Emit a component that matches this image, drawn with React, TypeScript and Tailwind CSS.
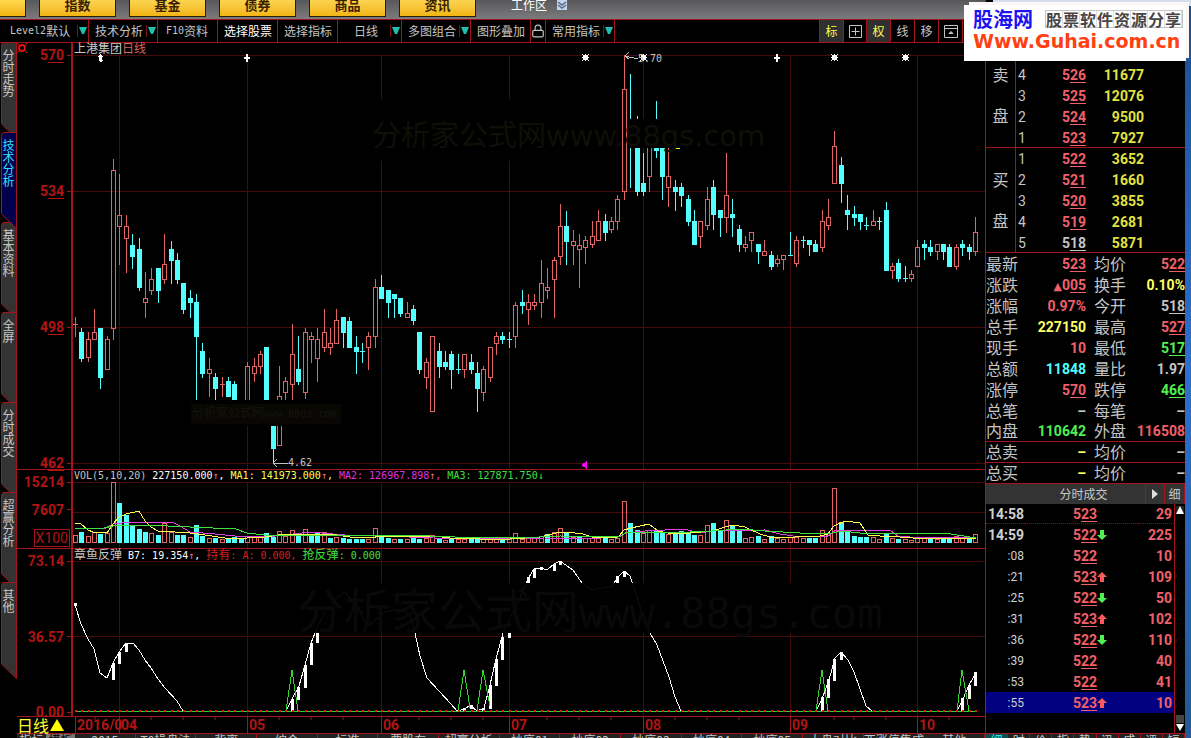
import { Lock } from "lucide-react";

type Candle = [string, number, number, number, number];

// kind, high, body top, body bottom, low ("r" = up, "c" = down)
const candles: Candle[] = [
  ["r", 317, 324, 325, 337], ["c", 328, 332, 359, 362], ["r", 332, 339, 358, 362], ["r", 309, 332, 340, 340],
  ["c", 328, 328, 378, 389], ["r", 336, 339, 370, 370], ["r", 159, 170, 329, 340], ["r", 174, 215, 227, 265],
  ["r", 215, 226, 239, 273], ["c", 234, 245, 257, 269], ["c", 238, 249, 288, 291], ["r", 272, 298, 303, 318],
  ["r", 268, 279, 291, 295], ["c", 268, 268, 291, 303], ["r", 234, 264, 280, 284], ["c", 241, 249, 261, 284],
  ["c", 253, 260, 280, 284], ["c", 283, 283, 310, 314], ["c", 290, 298, 303, 318], ["c", 294, 302, 337, 402],
  ["c", 343, 351, 374, 378], ["r", 358, 369, 374, 397], ["c", 373, 377, 389, 402], ["r", 377, 384, 385, 397],
  ["c", 377, 381, 397, 397], ["c", 381, 384, 404, 404], ["c", 402, 404, 412, 415], ["r", 362, 366, 410, 410],
  ["r", 358, 366, 374, 382], ["r", 351, 354, 367, 374], ["c", 347, 347, 410, 410], ["c", 405, 405, 449, 464],
  ["r", 366, 396, 446, 446], ["r", 377, 381, 393, 402], ["r", 324, 354, 385, 402], ["c", 336, 369, 382, 385],
  ["r", 328, 332, 393, 399], ["r", 332, 336, 340, 363], ["r", 328, 339, 359, 382], ["r", 309, 332, 348, 352],
  ["r", 328, 343, 348, 355], ["r", 309, 320, 344, 344], ["c", 317, 317, 333, 348], ["c", 317, 321, 348, 348],
  ["c", 336, 347, 352, 374], ["c", 343, 351, 352, 363], ["r", 332, 336, 348, 370], ["r", 279, 287, 337, 348],
  ["c", 275, 287, 299, 299], ["c", 290, 290, 303, 318], ["c", 294, 294, 299, 318], ["c", 298, 298, 314, 317],
  ["r", 302, 313, 318, 318], ["c", 305, 309, 321, 325], ["c", 332, 332, 370, 374], ["r", 358, 362, 378, 389],
  ["r", 336, 336, 412, 412], ["c", 343, 351, 367, 378], ["c", 351, 362, 367, 370], ["c", 351, 354, 370, 389],
  ["c", 354, 369, 370, 374], ["r", 354, 354, 370, 378], ["c", 354, 362, 370, 374], ["c", 362, 373, 389, 412],
  ["r", 366, 369, 393, 401], ["r", 347, 347, 378, 382], ["r", 332, 336, 344, 355], ["c", 332, 336, 340, 344],
  ["c", 332, 339, 340, 348], ["r", 302, 305, 337, 348], ["c", 290, 302, 306, 314], ["r", 294, 302, 310, 325],
  ["r", 294, 302, 306, 310], ["r", 260, 283, 303, 318], ["r", 268, 287, 291, 299], ["r", 257, 260, 280, 318],
  ["r", 204, 226, 257, 265], ["c", 211, 226, 242, 265], ["r", 230, 241, 246, 265], ["r", 234, 245, 250, 288],
  ["r", 236, 240, 248, 264], ["r", 221, 236, 245, 248], ["r", 210, 221, 241, 241], ["c", 214, 221, 233, 241],
  ["r", 217, 221, 230, 233], ["r", 195, 199, 222, 230], ["r", 55, 89, 192, 200], ["c", 74, 120, 136, 188],
  ["c", 116, 135, 192, 196], ["c", 153, 183, 192, 196], ["r", 140, 140, 177, 192], ["c", 101, 130, 151, 158],
  ["c", 140, 140, 177, 200], ["r", 140, 176, 188, 207], ["c", 180, 187, 192, 211], ["c", 183, 187, 196, 207],
  ["c", 195, 199, 222, 226], ["c", 210, 221, 245, 245], ["r", 221, 221, 237, 248], ["r", 187, 199, 226, 230],
  ["c", 180, 187, 215, 230], ["c", 210, 210, 218, 237], ["r", 153, 195, 218, 233], ["c", 199, 214, 218, 237],
  ["c", 225, 229, 245, 252], ["r", 236, 244, 248, 252], ["r", 232, 232, 241, 252], ["c", 244, 244, 252, 264],
  ["r", 240, 251, 256, 256], ["c", 251, 255, 267, 270], ["r", 255, 259, 264, 267], ["r", 255, 255, 260, 270],
  ["c", 232, 255, 256, 256], ["r", 236, 240, 264, 267], ["c", 236, 240, 241, 248], ["c", 240, 240, 245, 256],
  ["c", 240, 244, 252, 252], ["r", 210, 221, 248, 252], ["r", 199, 217, 226, 230], ["r", 131, 146, 184, 184],
  ["c", 157, 165, 184, 203], ["c", 195, 210, 215, 230], ["c", 206, 214, 218, 226], ["c", 214, 214, 222, 230],
  ["c", 217, 225, 226, 230], ["r", 210, 221, 226, 226], ["c", 217, 221, 222, 230], ["c", 202, 210, 271, 271],
  ["r", 263, 266, 271, 279], ["c", 259, 263, 279, 282], ["c", 266, 278, 279, 282], ["r", 270, 274, 279, 282],
  ["r", 240, 247, 267, 267], ["c", 240, 244, 248, 260], ["c", 240, 247, 252, 256], ["r", 244, 244, 252, 260],
  ["c", 244, 244, 252, 260], ["c", 244, 247, 267, 267], ["r", 244, 247, 267, 270], ["c", 240, 244, 248, 256],
  ["c", 244, 247, 252, 260], ["r", 217, 232, 252, 256],
];

const volumes =
  "r535 c532 r536 r532 c534 r533 r482 c503 c515 c525 c529 c532 r533 c535 r523 r532 c535 c535 r537 c525 c536 r538 c538 r539 c538 c537 c539 r536 r537 r537 c533 c537 r531 r536 r530 c535 r529 c535 c533 r532 c538 r537 c538 c539 c539 c539 r539 r528 c537 c538 r539 c539 r539 c538 c539 r538 r535 c539 r540 c539 r539 r539 c539 c539 r539 r537 r537 c539 r539 r533 r539 r538 r538 r536 c534 r532 r528 c532 r537 c537 r538 r538 r538 c538 r539 r538 r501 c523 c530 r533 r530 c531 c532 r534 c533 c531 c533 c535 r535 r525 c523 c531 r520 c525 c531 r538 r537 c536 r539 c536 r538 r539 r537 r537 r538 c538 c538 r530 r535 r488 c522 c531 c536 c537 c537 r537 r539 c534 r538 c539 r539 r540 r538 r538 c539 r539 c539 c539 r536 r538 c538 r534".split(" ");

const UP = "#e06464";
const DOWN = "#54ffff";
const GRID = "#460a0a";
const months = [119, 247, 381, 509, 643, 790, 917];

const xAt = (i: number) => Math.floor(75.25 + 6.384 * i);

// x, top, bottom of the signal bars in the bottom pane
const signals = [
  [113, 663, 680], [119, 652, 664], [126, 643, 652], [292, 699, 711], [298, 687, 700], [305, 665, 688],
  [311, 643, 665], [317, 632, 643], [464, 708, 711], [471, 705, 709], [483, 708, 711], [490, 685, 709],
  [496, 659, 686], [502, 637, 660], [509, 632, 638], [528, 577, 583], [534, 569, 578], [541, 567, 570],
  [554, 564, 571], [560, 561, 565], [617, 576, 583], [624, 571, 577], [822, 697, 711], [828, 679, 698],
  [834, 659, 681], [841, 652, 660], [962, 698, 711], [969, 685, 699], [975, 672, 686],
];

const stars = [585, 643, 834, 905];

function Grid({ rows, top, bottom }: { rows: number[]; top: number; bottom: number }) {
  return (
    <g fill={GRID}>
      {rows.map((y) => (
        <rect key={y} x={73} y={y} width={912} height={1} />
      ))}
      {months.map((x) => (
        <rect key={x} x={x} y={top} width={1} height={bottom - top} />
      ))}
    </g>
  );
}

function PriceChart() {
  return (
    <svg className="block h-full w-full" viewBox="73 43 912 426" preserveAspectRatio="none" shapeRendering="crispEdges">
      <Grid rows={[55, 191, 327, 463]} top={55} bottom={469} />
      {candles.map(([kind, hi, top, bot, lo], i) => {
        const x = xAt(i);
        const color = kind === "r" ? UP : DOWN;
        return (
          <g key={i} fill={color}>
            <rect x={x} y={hi} width={1} height={top - hi} />
            <rect x={x} y={bot} width={1} height={lo - bot} />
            {kind === "r" && bot - top > 1 ? (
              <rect x={x - 1.5} y={top + 0.5} width={4} height={bot - top - 1} fill="none" stroke={color} />
            ) : (
              <rect x={x - 2} y={top} width={5} height={bot - top} />
            )}
          </g>
        );
      })}
      <rect x={370} y={99} width={251} height={62} />
      <rect x={627} y={119} width={150} height={29} />
      <rect x={190} y={400} width={152} height={26} />
      <rect x={191} y={404} width={150} height={20} fill="#080703" />
      <path d="M626 140h2v3h-2zM673 148h7v1h-7z" fill="#ff0" />
      <path d="M587 461v8l-6-4z" fill="#f0f" />
      {/* event markers */}
      <g fill="#fff">
        <path d="M100 54h1l2 3h-1v3h1l-2 2h-1l-2-2h1v-3h-1z" />
        <path d="M246 54h2v3h2v2h-2v3h-2v-3h-2v-2h2zM776 54h2v3h2v2h-2v3h-2v-3h-2v-2h2z" />
        {stars.map((x) => (
          <path key={x} d={`M${x - 2} 55h5v5h-5zM${x - 3} 54h1v1h-1zM${x + 3} 54h1v1h-1zM${x - 3} 60h1v1h-1zM${x + 3} 60h1v1h-1zM${x} 54h1v7h-1zM${x - 3} 57h7v1h-7z`} />
        ))}
      </g>
      <path d="M629 52l-4 4 4 3M625 56l13 3M277 459l-4 4 4 4M273 463.5h15" fill="none" stroke="#c0c0c0" />
    </svg>
  );
}

function VolumeChart() {
  return (
    <svg className="block h-full w-full" viewBox="73 470 912 78" preserveAspectRatio="none" shapeRendering="crispEdges">
      <Grid rows={[482, 512]} top={482} bottom={548} />
      {volumes.map((v, i) => {
        const x = xAt(i);
        const y = Number(v.slice(1));
        return v[0] === "r" ? (
          <rect key={i} x={x - 1.5} y={y + 0.5} width={4} height={542 - y} fill="none" stroke={UP} />
        ) : (
          <rect key={i} x={x - 2} y={y} width={5} height={543 - y} fill={DOWN} />
        );
      })}
      <g fill="none">
        <path stroke="#e040e0" d="M104 529L113 524 122 523 139 522 172 522 180 526 190 532 215 534 235 536 265 537 285 535 310 532 345 535 385 536 433 538 510 539 545 538 600 538 618 537 626 533 645 531 665 530 684 529 700 533 712 531 765 530 780 534 800 537 828 536 836 530 890 530 898 536 910 537 976 538" />
        <path stroke="#ffff50" d="M75 523L81 524 88 530 93 532 107 533 113 524 119 517 126 514 139 511 145 521 151 527 158 531 175 532 190 533 205 535 225 538 247 538 265 537 285 534 330 534 350 537 370 538 381 536 400 537 433 536 450 538 480 539 510 539 540 537 560 532 575 533 583 534 592 537 615 538 619 536 624 530 631 528 649 524 658 531 668 533 690 533 712 531 722 528 732 525 745 527 760 534 770 537 795 537 820 536 828 534 834 526 845 521 860 523 868 535 880 536 900 537 925 539 950 538 976 538" />
        <path stroke="#40e040" d="M75 528L104 528 113 526 145 525 190 527 236 529 247 533 265 535 300 535 430 536 480 538 540 537 560 536 620 537 625 533 640 532 690 532 712 531 740 529 765 531 800 533 832 533 842 531 860 533 945 533 976 538" />
      </g>
    </svg>
  );
}

function SignalChart() {
  return (
    <svg className="block h-full w-full" viewBox="73 549 912 167" preserveAspectRatio="none" shapeRendering="crispEdges">
      <Grid rows={[561, 636]} top={549} bottom={716} />
      <g fill="none" stroke="#fff">
        <path d="M75 605L81 624 88 639 94 649 100 673 107 678 113 663 119 652 126 643 133 643 139 650 145 660 151 668 158 679 165 688 177 701 183 711M286 711L292 699 299 686 305 665 311 643 317 628 325 612 337 598 345 592 355 605 368 626 385 612 400 609 410 615 415 633 420 656 427 678 439 691 451 704 457 711 465 709 470 705 477 711 484 708 490 685 496 659 503 633 509 620 520 598 528 579 534 569 541 568 547 570 554 564 560 561 573 570 582 583 592 590 612 586 618 577 624 571 630 576 636 594 645 622 650 633 657 645 669 677 675 697 681 711M816 711L822 699 829 680 835 658 841 652 848 660 854 672 866 706 872 711M957 711L963 699 969 685 976 673" />
      </g>
      <path d="M74 603h3v3h-3z" fill="#fff" />
      {signals.map(([x, top, bottom]) => (
        <rect key={x} x={x - 1} y={top} width={3} height={bottom - top} fill="#fff" />
      ))}
      <rect x={297} y={583} width={595} height={50} fill="#000" fillOpacity={0.95} />
      <rect x={75} y={711} width={902} height={1} fill="#2ed62e" />
      <path d="M286 711L292 670 298 711M458 711L464 670 470 708M477 711L483 670 490 706M816 711L822 670 828 711M957 711L962 670 969 711" fill="none" stroke="#2ed62e" />
      {candles.map((_, i) => (
        <rect key={i} x={xAt(i)} y={710} width={2} height={2} fill="#e02020" />
      ))}
    </svg>
  );
}

function Axis({ children }: { children: React.ReactNode }) {
  return (
    <div className="flex w-14 shrink-0 border-r-2 border-[#a3141c] pl-1 text-right font-[Roboto] text-sm/4 font-bold text-[#b01414]">
      {children}
    </div>
  );
}

function Tick({ children }: { children: React.ReactNode }) {
  return (
    <p className="flex items-center justify-end gap-[3px]">
      <span>{children}</span>
      <i className="h-px w-1 bg-[#a3141c]" />
    </p>
  );
}

// prices are quoted with the last two digits underlined
function Price({ value }: { value: string }) {
  return (
    <>
      {value[0]}
      <span className="underline decoration-1 underline-offset-2">{value.slice(1)}</span>
    </>
  );
}

function Caret() {
  return (
    <>
      <i className="ml-auto h-3 w-px bg-[#7a1016]" />
      <svg className="mr-px ml-px h-2 w-2" viewBox="0 0 8 8">
        <path d="M0 0h8L5 7H3z" fill="#1fc0b0" />
      </svg>
    </>
  );
}

const goldTabs = ["指数", "基金", "债券", "商品", "资讯"];

function TopBar() {
  return (
    <nav className="flex h-[19px] items-start gap-[13px] overflow-hidden bg-linear-to-b from-[#58585a] to-[#7c7c7e]">
      <button className="h-[17px] w-[26px] shrink-0 border-r border-b border-[#2a1d00] bg-linear-to-b from-[#ffd84a] to-[#f2b50c]" />
      {goldTabs.map((t) => (
        <button
          key={t}
          className="-mt-[7px] h-6 w-[77px] shrink-0 border border-[#2a1d00] bg-linear-to-b from-[#ffe060] to-[#f2b50c] text-[13px]/5 font-bold text-[#3a2200]"
        >
          {t}
        </button>
      ))}
      <button className="-mt-[3px] ml-[22px] flex h-4 items-center gap-2.5 text-xs/4 text-white">
        工作区
        <svg className="h-2.5 w-2.5" viewBox="0 0 10 10">
          <path d="M0 0h10v10H0z" fill="#c4d4ec" />
          <path d="M1 2l4 3 4-3M1 5l4 3 4-3" fill="none" stroke="#5a6a80" strokeWidth="1.5" />
        </svg>
      </button>
    </nav>
  );
}

const tools = [
  { label: "默认", latin: "Level2", width: "w-[89px] pl-2.5", caret: true },
  { label: "技术分析", width: "w-[69px] pl-1.5", caret: true },
  { label: "资料", latin: "F10", width: "w-[60px] pl-2" },
  { label: "选择股票", width: "w-[60px] pl-1.5 text-white" },
  { label: "选择指标", width: "w-[60px] pl-1.5" },
  { label: "日线", width: "w-16 pl-4", caret: true },
  { label: "多图组合", width: "w-[69px] pl-1.5", caret: true },
  { label: "图形叠加", width: "w-[60px] pl-1.5" },
  { label: "", width: "w-[15px]", lock: true },
  { label: "常用指标", width: "w-[69px] pl-1.5", caret: true },
];

function Toolbar() {
  return (
    <nav className="flex h-6 items-stretch border-y border-[#a3141c] text-xs/5 whitespace-nowrap text-[#c4c4c4]">
      {tools.map((t) => (
        <button key={t.label} aria-label={t.label || "锁定"} className={`flex shrink-0 items-center border-r border-[#a3141c] ${t.width}`}>
          {t.latin && <span className="font-['DejaVu_Sans_Mono'] text-[10px]">{t.latin}</span>}
          {t.label}
          {t.lock && <Lock className="h-4 w-3.5" strokeWidth={2} />}
          {t.caret && <Caret />}
        </button>
      ))}
      <div className="mr-[22px] ml-auto flex border-l border-[#a3141c]">
        <button className="w-6 border-r border-[#a3141c] bg-[#303030] text-[#ffff50]">标</button>
        <button aria-label="四图" className="flex w-[23px] items-center justify-center border-r border-[#a3141c]">
          <svg className="h-[13px] w-[13px]" viewBox="0 0 13 13" fill="none" stroke="#c4c4c4">
            <path d="M.5.5h12v12H.5zM6.5 2.5v8M2.5 6.5h8" />
          </svg>
        </button>
        <button className="w-6 border-r border-[#a3141c] bg-[#303030] text-[#ffff50]">权</button>
        <button className="w-6 border-r border-[#a3141c]">线</button>
        <button className="w-6 border-r border-[#a3141c]">移</button>
        <button aria-label="窗口" className="flex w-6 items-center justify-center border-r border-[#a3141c]">
          <svg className="h-[13px] w-3.5" viewBox="0 0 14 13" fill="none" stroke="#c4c4c4">
            <path d="M.5.5h13v12H.5zM.5 3.5h13" />
            <path d="M5 8.5h4L7 6.5z" fill="#c4c4c4" />
          </svg>
        </button>
      </div>
    </nav>
  );
}

const sideTabs = ["分时走势", "技术分析", "基本资料", "全屏", "分时成交", "超赢分析", "其他"];

function Sidebar() {
  return (
    <aside className="-mt-px w-[17px] shrink-0">
      {sideTabs.map((t) => {
        const active = t === "技术分析";
        return (
          <button key={t} className={`relative block h-[90px] w-full ${active ? "z-10 text-[#30e0ff]" : "text-[#c8c8c8]"}`}>
            <svg className="absolute top-0 left-0 h-[97px] w-[17px]" viewBox="0 0 17 97">
              <path d="M1.500 3L3 .5H16.500V96.500L1.500 82z" fill={active ? "#00004c" : "#333"} stroke="#a3141c" />
            </svg>
            <span className="relative flex h-full flex-col items-center pt-[7px] text-xs/3">
              {[...t].map((c) => (
                <span key={c}>{c}</span>
              ))}
            </span>
          </button>
        );
      })}
    </aside>
  );
}

// level 5 of the ask side sits behind the badge and is left blank
const asks = [["", "", ""], ["4", "526", "11677"], ["3", "525", "12076"], ["2", "524", "9500"], ["1", "523", "7927"]];
const bids = [["1", "522", "3652"], ["2", "521", "1660"], ["3", "520", "3855"], ["4", "519", "2681"], ["5", "518", "5871"]];

function Book({ side, rows }: { side: string; rows: string[][] }) {
  return (
    <div className="flex h-[105px] border-b border-[#a3141c]">
      <div className="grid w-[30px] grid-rows-5 border-r border-[#a3141c] text-center text-base/5 text-[#c4c4c4]">
        <span className="row-start-2">{side}</span>
        <span className="row-start-4">盘</span>
      </div>
      <table className="font-[Roboto] text-sm/4">
        <tbody>
          {rows.map(([n, price, vol]) => (
            <tr key={n}>
              <td className="h-[21px] w-5 p-0 pl-0.5 text-[#c4c4c4]">{n}</td>
              <td className={`w-[50px] p-0 text-right font-bold ${price === "518" ? "text-[#c4c4c4]" : "text-[#f0606a]"}`}>
                <Price value={price} />
              </td>
              <td className="w-[58px] p-0 text-right font-bold text-[#e2e240]">{vol}</td>
            </tr>
          ))}
        </tbody>
      </table>
    </div>
  );
}

const RED = "text-[#f0606a]";
const GREEN = "text-[#50f050]";
const GRAY = "text-[#c4c4c4]";
const YELLOW = "text-[#ffff60]";

const quotes = [
  ["最新", "523", RED, "均价", "522", RED],
  ["涨跌", "▲005", RED, "换手", "0.10%", YELLOW],
  ["涨幅", "0.97%", RED, "今开", "518", GRAY],
  ["总手", "227150", YELLOW, "最高", "527", RED],
  ["现手", "10", RED, "最低", "517", GREEN],
  ["总额", "11848", "text-[#50ffff]", "量比", "1.97", GRAY],
  ["涨停", "570", RED, "跌停", "466", GREEN],
  ["总笔", "–", GRAY, "每笔", "–", GRAY],
  ["内盘", "110642", GREEN, "外盘", "116508", RED],
  ["总卖", "–", YELLOW, "均价", "–", GRAY],
  ["总买", "–", YELLOW, "均价", "–", GRAY],
];

function Value({ v }: { v: string }) {
  if (v.startsWith("▲")) {
    return (
      <>
        <span className="font-['DejaVu_Sans'] text-[11px]/3">▲</span>
        <Price value={v.slice(1)} />
      </>
    );
  }
  return /^\d{3}$/.test(v) ? <Price value={v} /> : <>{v}</>;
}

function Quotes() {
  return (
    <table className="w-full border-separate border-spacing-0 text-base/4">
      <tbody>
        {quotes.map(([a, av, ac, b, bv, bc], i) => {
          const cell = `h-[21px] p-0 ${i >= 8 ? "border-b border-[#a3141c]" : ""}`;
          return (
            <tr key={a}>
              <th className={`${cell} w-8 font-normal text-[#c4c4c4]`}>
                <span className="-mt-0.5 block">{a}</span>
              </th>
              <td className={`${cell} w-[68px] text-right font-[Roboto] text-sm/4 font-bold ${ac}`}>
                <Value v={av} />
              </td>
              <th className={`${cell} w-10 font-normal text-[#c4c4c4]`}>
                <span className="-mt-0.5 block pl-2">{b}</span>
              </th>
              <td className={`${cell} text-right font-[Roboto] text-sm/4 font-bold ${bc}`}>
                <Value v={bv} />
              </td>
            </tr>
          );
        })}
      </tbody>
    </table>
  );
}

const trades = [
  ["14:58", "523", "", "29"],
  ["14:59", "522", "down", "225"],
  [":08", "522", "", "10"],
  [":21", "523", "up", "109"],
  [":25", "522", "down", "50"],
  [":31", "523", "up", "102"],
  [":36", "522", "down", "110"],
  [":39", "522", "", "40"],
  [":53", "522", "", "41"],
  [":55", "523", "up", "10"],
];

function Trades() {
  return (
    <section className="flex min-h-0 flex-1 flex-col">
      <header className="flex h-5 items-stretch bg-[#333] text-xs/5 text-[#c8c8c8]">
        <h2 className="flex-1 pl-9 text-center">分时成交</h2>
        <button aria-label="展开" className="flex w-5 items-center justify-center border-x border-[#a3141c]">
          <svg className="h-2.5 w-1.5" viewBox="0 0 6 10">
            <path d="M0 0l6 5-6 5z" fill="#ddd" />
          </svg>
        </button>
        <button className="w-5 border-r border-[#a3141c]">细</button>
      </header>
      <div className="flex flex-1">
        <table className="w-full flex-1 self-start border-separate border-spacing-0 font-[Roboto] text-sm/4 font-bold text-[#f0606a]">
          <tbody>
            {trades.map(([time, price, dir, vol], i) => {
              const cell = i === 0 ? "h-5 p-0 border-b border-dotted border-[#7a1016]" : "h-[21px] p-0";
              return (
                <tr key={time} className={i === 9 ? "bg-[#000080]" : ""}>
                  <td className={`${cell} w-[38px] text-right text-[#d0d0d0] ${i > 1 ? "text-xs font-normal" : ""}`}>{time}</td>
                  <td className={cell}>
                    <span className="flex items-center pl-[49px]">
                      <span>
                        <Price value={price} />
                      </span>
                      {dir && (
                        <svg className={`h-2.5 w-2.5 ${dir === "up" ? "text-[#ff5a5a]" : "rotate-180 text-[#50f050]"}`} viewBox="0 0 10 10">
                          <path d="M5 0l5 5H7v5H3V5H0z" fill="currentColor" />
                        </svg>
                      )}
                    </span>
                  </td>
                  <td className={`${cell} text-right`}>
                    <span className="pr-0.5">{vol}</span>
                  </td>
                </tr>
              );
            })}
          </tbody>
        </table>
        <div className="flex w-[11px] flex-col items-center justify-between border-l border-[#a3141c] py-0.5">
          <svg className="h-2 w-2" viewBox="0 0 8 8">
            <path d="M0 0h8v8H0z" fill="#fff" />
            <path d="M0 0h4L0 8zM8 0H4l4 8z" fill="#222" />
          </svg>
          <div>
            <i className="block h-2 w-2 bg-[#444]" />
            <svg className="h-2 w-2" viewBox="0 0 8 8">
              <path d="M0 1h8L4 8z" fill="#fff" />
            </svg>
          </div>
        </div>
      </div>
    </section>
  );
}

function Legend({ children }: { children: React.ReactNode }) {
  return (
    <p className="absolute top-0 left-px font-['DejaVu_Sans_Mono','Noto_Sans_CJK_SC'] text-[10px]/3 whitespace-pre">
      {children}
    </p>
  );
}

const Up = () => <span className="text-[#ff7070]">↑</span>;

const bottomTabs = ["2015", "T0操盘法", "背离", "综合", "标准", "要股东", "超赢分析", "抄底01", "抄底02", "抄底03", "抄底04", "抄底05", "大盘对比", "西涨停集成", "其他"];
const rightTabs = ["细", "时", "价", "指", "势", "讯", "成", "评", "短"];

export default function App() {
  return (
    <div className="relative flex h-screen overflow-hidden bg-black font-['Noto_Sans_CJK_SC',sans-serif] select-none">
      <div className="flex min-w-0 flex-1 flex-col">
        <TopBar />
        <Toolbar />
        <div className="flex min-h-0 flex-1">
          <Sidebar />
          <div className="flex min-w-0 flex-1 flex-col">
            {/* Price */}
            <div className="relative flex min-h-0 flex-1 border-b border-[#a3141c]">
              <svg className="absolute top-0 left-0 h-2.5 w-2.5" viewBox="0 0 10 10">
                <circle cx="5" cy="5" r="3" fill="none" stroke="#e01010" strokeWidth="2" />
                <path d="M0 0l2 2M10 0L8 2M0 10l2-2M10 10L8 8" stroke="#e01010" />
              </svg>
              <Axis>
                <div className="-mb-0.5 flex flex-1 flex-col justify-between pt-1">
                  {["570", "534", "498", "462"].map((v) => (
                    <Tick key={v}>
                      <Price value={v} />
                    </Tick>
                  ))}
                </div>
              </Axis>
              <div className="relative min-w-0 flex-1">
                <PriceChart />
                <p className="absolute -top-px left-px text-xs/3 text-[#c8c8c8]">
                  上港集团<span className="text-[#d86464]">日线</span>
                </p>
                <span className="absolute top-2.5 left-[565px] font-['DejaVu_Sans_Mono'] text-[10px]/3 text-[#c4c4c4]">5.70</span>
                <span className="absolute bottom-0 left-[215px] font-['DejaVu_Sans_Mono'] text-[10px]/3 text-[#c4c4c4]">4.62</span>
                <span className="absolute top-[74px] left-[299px] text-[29px]/8 whitespace-nowrap text-[#0f0f08]">
                  分析家公式网<span className="font-['DejaVu_Sans']">www.88gs.com</span>
                </span>
                <span className="absolute bottom-[47px] left-[119px] text-xs/4 whitespace-nowrap text-[#15140c]">
                  分析家公式网<span className="font-['DejaVu_Sans_Mono'] text-[10px]">www.88gs.com</span>
                </span>
              </div>
            </div>

            {/* Volume */}
            <div className="flex h-[79px] shrink-0 border-b border-[#a3141c]">
              <Axis>
                <div className="flex flex-1 flex-col items-end justify-between pt-1 pb-px">
                  <Tick>15214</Tick>
                  <Tick>7607</Tick>
                  <span className="mr-px border border-[#a3141c] px-px font-normal">X100</span>
                </div>
              </Axis>
              <div className="relative min-w-0 flex-1">
                <VolumeChart />
                <Legend>
                  <span className="text-[#c4c4c4]">VOL(5,10,20) </span>
                  <span className="text-white">227150.000<Up />, </span>
                  <span className="text-[#ffff50]">MA1: 141973.000<Up />, </span>
                  <span className="text-[#e030e0]">MA2: 126967.898<Up />, </span>
                  <span className="text-[#40e040]">MA3: 127871.750↓</span>
                </Legend>
              </div>
            </div>

            {/* Signal */}
            <div className="flex h-[168px] shrink-0 border-b border-[#a3141c]">
              <Axis>
                <div className="-mb-1 flex flex-1 flex-col justify-between pt-1">
                  <Tick>73.14</Tick>
                  <Tick>36.57</Tick>
                  <Tick>0.00</Tick>
                </div>
              </Axis>
              <div className="relative min-w-0 flex-1">
                <SignalChart />
                <Legend>
                  <span className="text-xs/3 text-[#c4c4c4]">章鱼反弹</span>
                  <span className="text-white"> B7: 19.354<Up />, </span>
                  <span className="text-[#d02020]">
                    <span className="text-xs/3">持有</span>: A: 0.000,{" "}
                  </span>
                  <span className="text-[#40e040]">
                    <span className="text-xs/3">抢反弹</span>: 0.000
                  </span>
                </Legend>
                <span className="absolute top-[34px] left-[224px] text-[47px]/[50px] whitespace-nowrap text-[#090909]">
                  分析家公式网<span className="font-['DejaVu_Sans_Mono'] text-[42px]">www.88gs.com</span>
                </span>
              </div>
            </div>

            {/* Dates */}
            <div className="flex h-[17px] shrink-0 border-b border-[#a3141c] font-[Roboto] text-sm/4 font-bold text-[#b01414]">
              <button className="flex w-[58px] shrink-0 items-center gap-px font-['Noto_Sans_CJK_SC'] text-base/4 font-normal text-[#ffff30]">
                日线
                <svg className="h-3 w-3.5" viewBox="0 0 14 12">
                  <path d="M7 0l7 12H0z" fill="#ff0" />
                </svg>
              </button>
              <div className="relative grid flex-1 grid-cols-[44fr_128fr_134fr_128fr_134fr_147fr_127fr_68fr]">
                {["2016/0", "04", "05", "06", "07", "08", "09", "10"].map((m) => (
                  <span key={m} className="min-w-0 border-l border-[#a3141c] pl-px">
                    {m}
                  </span>
                ))}
                <svg className="absolute inset-0 h-full w-full" viewBox="75 717 910 16" preserveAspectRatio="none">
                  <path d="M95 717v3M151 717v3M183 717v3M215 717v3M279 717v3M311 717v3M343 717v3M419 717v3M451 717v3M483 717v3M547 717v3M579 717v3M611 717v3M675 717v3M707 717v3M739 717v3M834 717v3M854 717v3M886 717v3M949 717v3" stroke="#a3141c" />
                </svg>
              </div>
            </div>
            <nav className="flex h-1 shrink-0 overflow-hidden bg-[#222] text-xs/3 whitespace-nowrap text-[#c8c8c8]">
              <button className="w-[29px] shrink-0">指标</button>
              <button className="w-[29px] shrink-0 bg-[#777] text-black">模板</button>
              {bottomTabs.map((t) => (
                <button key={t} className="min-w-0 flex-1 border-r border-[#a3141c]">
                  {t}
                </button>
              ))}
            </nav>
          </div>
        </div>
      </div>

      {/* Quote panel */}
      <aside className="flex w-[200px] shrink-0 flex-col border-l border-[#a3141c] pt-[43px]">
        <Book side="卖" rows={asks} />
        <Book side="买" rows={bids} />
        <Quotes />
        <Trades />
        <nav className="grid h-[5px] grid-cols-9 overflow-hidden border-t border-[#a3141c] bg-[#222] text-center text-xs/3 text-[#c8c8c8]">
          {rightTabs.map((t, i) => (
            <button key={t} className={`border-r border-[#a3141c] ${i === 0 ? "bg-[#0a5050] text-[#30e0e0]" : ""}`}>
              {t}
            </button>
          ))}
        </nav>
      </aside>
      <div className="w-1.5 shrink-0 bg-linear-to-b from-[#1a4f8e] via-[#2f6fd0] to-[#235a94]" />

      {/* Site badge */}
      <div className="absolute top-0 right-0 h-1.5 w-[198px] bg-[#d5def0]" />
      <div className="absolute top-0.5 right-0.5 h-14 w-[220px] bg-[#fdf6f4]" />
      <a
        href="#guhai"
        className="absolute top-[5px] right-[5px] block h-14 w-[222px] bg-white pt-1 pl-[9px] whitespace-nowrap"
      >
        <span className="flex h-5 items-center justify-between pr-[3px] font-bold">
          <span className="text-xl/5 text-[#1c14f0]">股海网</span>
          <span className="flex border border-[#c4c4c4] text-base/4 text-[#4a4444]">
            {[..."股票软件资源分享"].map((c) => (
              <span key={c} className="w-[17px] border-r border-[#ddd] text-center">
                {c}
              </span>
            ))}
          </span>
        </span>
        <span className="block font-['DejaVu_Sans'] text-[19px]/6 font-bold text-[#ff4010]">Www.Guhai.com.cn</span>
      </a>
    </div>
  );
}
